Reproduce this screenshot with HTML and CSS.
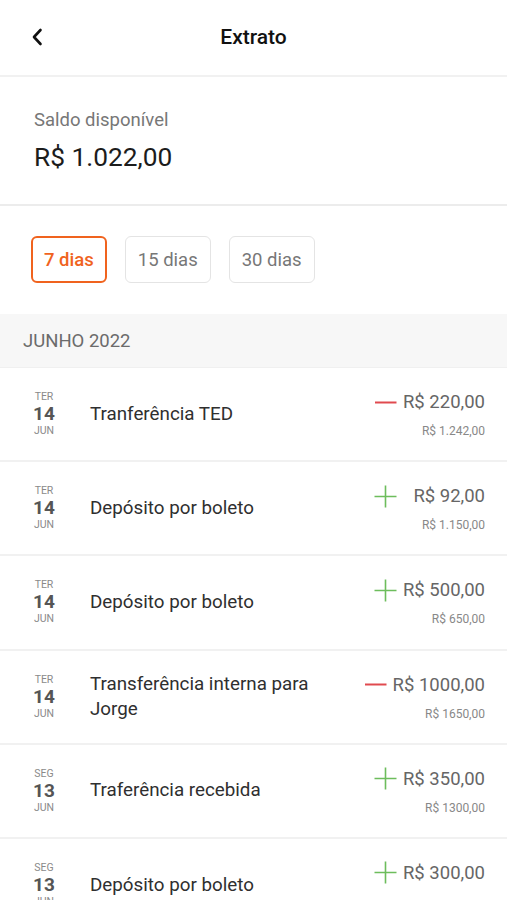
FILE: index.html
```html
<!DOCTYPE html>
<html lang="pt-BR">
<head>
<meta charset="utf-8">
<title>Extrato</title>
<link rel="stylesheet" href="styles.css">
</head>
<body>
<div class="app">
  <header class="topbar">
    <span class="back" aria-label="Voltar">
      <svg width="12" height="18" viewBox="0 0 12 18"><path d="M9.5 2 L3 9 L9.5 16" fill="none" stroke="#111" stroke-width="2.6" stroke-linecap="round" stroke-linejoin="round"/></svg>
    </span>
    <h1 class="title">Extrato</h1>
    <span></span>
  </header>

  <section class="balance">
    <div class="balance-label">Saldo disponível</div>
    <div class="balance-value">R$ 1.022,00</div>
  </section>

  <section class="filters">
    <button class="chip chip-active">7 dias</button>
    <button class="chip">15 dias</button>
    <button class="chip">30 dias</button>
  </section>

  <div class="month">JUNHO 2022</div>

  <ul class="list">
    <li class="row">
      <div class="date"><span class="dow">TER</span><span class="day">14</span><span class="mon">JUN</span></div>
      <div class="desc">Tranferência TED</div>
      <div class="values">
        <div class="amount-line">
          <svg class="sign" width="23" height="23" viewBox="0 0 23 23"><path d="M1 11.5 H22.5" stroke="#e04a4f" stroke-width="2"/></svg>
          <span class="amount">R$ 220,00</span>
        </div>
        <div class="after">R$ 1.242,00</div>
      </div>
    </li>
    <li class="row">
      <div class="date"><span class="dow">TER</span><span class="day">14</span><span class="mon">JUN</span></div>
      <div class="desc">Depósito por boleto</div>
      <div class="values">
        <div class="amount-line">
          <svg class="sign" width="23" height="23" viewBox="0 0 23 23"><path d="M0.5 11.5 H22.5 M11.5 0.5 V22.5" stroke="#6dbd5c" stroke-width="1.6"/></svg>
          <span class="amount">R$ 92,00</span>
        </div>
        <div class="after">R$ 1.150,00</div>
      </div>
    </li>
    <li class="row">
      <div class="date"><span class="dow">TER</span><span class="day">14</span><span class="mon">JUN</span></div>
      <div class="desc">Depósito por boleto</div>
      <div class="values">
        <div class="amount-line">
          <svg class="sign" width="23" height="23" viewBox="0 0 23 23"><path d="M0.5 11.5 H22.5 M11.5 0.5 V22.5" stroke="#6dbd5c" stroke-width="1.6"/></svg>
          <span class="amount">R$ 500,00</span>
        </div>
        <div class="after">R$ 650,00</div>
      </div>
    </li>
    <li class="row">
      <div class="date"><span class="dow">TER</span><span class="day">14</span><span class="mon">JUN</span></div>
      <div class="desc">Transferência interna para Jorge</div>
      <div class="values">
        <div class="amount-line">
          <svg class="sign" width="23" height="23" viewBox="0 0 23 23"><path d="M1 11.5 H22.5" stroke="#e04a4f" stroke-width="2"/></svg>
          <span class="amount">R$ 1000,00</span>
        </div>
        <div class="after">R$ 1650,00</div>
      </div>
    </li>
    <li class="row">
      <div class="date"><span class="dow">SEG</span><span class="day">13</span><span class="mon">JUN</span></div>
      <div class="desc">Traferência recebida</div>
      <div class="values">
        <div class="amount-line">
          <svg class="sign" width="23" height="23" viewBox="0 0 23 23"><path d="M0.5 11.5 H22.5 M11.5 0.5 V22.5" stroke="#6dbd5c" stroke-width="1.6"/></svg>
          <span class="amount">R$ 350,00</span>
        </div>
        <div class="after">R$ 1300,00</div>
      </div>
    </li>
    <li class="row">
      <div class="date"><span class="dow">SEG</span><span class="day">13</span><span class="mon">JUN</span></div>
      <div class="desc">Depósito por boleto</div>
      <div class="values">
        <div class="amount-line">
          <svg class="sign" width="23" height="23" viewBox="0 0 23 23"><path d="M0.5 11.5 H22.5 M11.5 0.5 V22.5" stroke="#6dbd5c" stroke-width="1.6"/></svg>
          <span class="amount">R$ 300,00</span>
        </div>
      </div>
    </li>
  </ul>
</div>
</body>
</html>
```

FILE: styles.css
```css
* { box-sizing: border-box; }

html, body {
  margin: 0;
  padding: 0;
  background: #ffffff;
}

body {
  font-family: Roboto, "Noto Sans", "Liberation Sans", sans-serif;
  color: #222;
  overflow: hidden;
}

.app {
  width: 507px;
}

.topbar {
  height: 77px;
  display: grid;
  grid-template-columns: 60px 1fr 60px;
  align-items: center;
  border-bottom: 2px solid #f1f1f1;
  padding-bottom: 1px;
}

.back {
  display: flex;
  align-items: center;
  padding-left: 31px;
  height: 20px;
}

.title {
  margin: 0;
  text-align: center;
  font-size: 21px;
  font-weight: 500;
  color: #111;
}

.balance {
  padding: 32px 34px 31px;
  border-bottom: 2px solid #ececec;
}

.balance-label {
  font-size: 18.5px;
  line-height: 22px;
  color: #777;
}

.balance-value {
  margin-top: 11px;
  font-size: 26.3px;
  line-height: 31px;
  color: #1c1c1c;
}

.filters {
  display: flex;
  gap: 18px;
  padding: 30px 31px 31px;
}

.chip {
  height: 47px;
  padding: 0 12px;
  border: 1px solid #e4e4e4;
  border-radius: 6px;
  background: #fff;
  font-family: inherit;
  font-size: 18.5px;
  color: #777;
  cursor: pointer;
}

.chip-active {
  border: 2px solid #f0631e;
  color: #f0631e;
  font-weight: 500;
  padding: 0 11px;
}

.month {
  height: 54px;
  display: flex;
  align-items: center;
  padding-left: 23px;
  background: #f7f7f7;
  font-size: 18.5px;
  color: #6b6b6b;
  border-bottom: 1px solid #f0f0f0;
}

.list {
  list-style: none;
  margin: 0;
  padding: 0;
}

.row {
  height: 94.2px;
  display: flex;
  align-items: center;
  padding: 0 22px 0 23px;
  border-bottom: 2px solid #f1f1f1;
}

.date {
  width: 42px;
  display: flex;
  flex-direction: column;
  align-items: center;
  flex-shrink: 0;
}

.dow, .mon {
  font-size: 10.5px;
  line-height: 12px;
  color: #8a8a8a;
}

.day {
  font-size: 19px;
  line-height: 22px;
  font-weight: 700;
  color: #555;
}

.desc {
  flex: 1;
  margin-left: 25px;
  max-width: 232px;
  font-size: 18.8px;
  line-height: 25px;
  color: #2f2f2f;
  margin-right: auto;
}

.values {
  display: flex;
  flex-direction: column;
  align-items: flex-end;
  flex-shrink: 0;
  margin-left: auto;
  align-self: flex-start;
  padding-top: 22px;
}

.amount-line {
  display: flex;
  align-items: center;
  gap: 6px;
  height: 24px;
}

.sign {
  display: block;
  flex-shrink: 0;
}

.amount {
  min-width: 82px;
  text-align: right;
  font-size: 18.5px;
  line-height: 24px;
  color: #666;
  white-space: nowrap;
}

.after {
  margin-top: 10px;
  font-size: 12px;
  line-height: 14px;
  color: #888;
}
```
